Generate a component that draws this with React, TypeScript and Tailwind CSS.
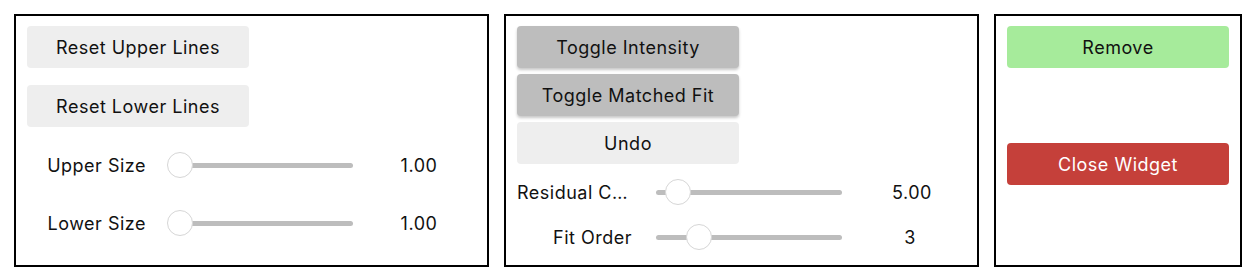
import React from 'react';

const font = { fontFamily: 'Inter, "Noto Sans", sans-serif' };

function Btn({ label, tone = 'plain' }: { label: string; tone?: 'plain' | 'mod' | 'ok' | 'danger' }) {
  const tones = {
    plain: 'bg-[#eeeeee] text-[#111111]',
    mod: 'bg-[#bdbdbd] text-[#111111] shadow-[0_2px_3px_rgba(0,0,0,0.22)]',
    ok: 'bg-[#a6eb9b] text-[#111111]',
    danger: 'bg-[#c5403a] text-white',
  };
  return (
    <button className={`w-[222px] h-[42px] shrink-0 rounded-[4px] pt-[1px] text-[18px] tracking-[0.5px] ${tones[tone]}`}>
      {label}
    </button>
  );
}

interface SliderRowProps {
  label: string;
  value: string;
  pos: number; // thumb center offset from track start
  labelW: number;
  trackW: number;
  valueGap: number;
}

function SliderRow({ label, value, pos, labelW, trackW, valueGap }: SliderRowProps) {
  return (
    <div className="flex items-center h-[32px] text-[18px] tracking-[0.5px] text-[#111111]">
      <div className="shrink-0 truncate text-right" style={{ width: labelW }}>
        {label}
      </div>
      <div className="relative shrink-0 ml-[24px] h-[32px] flex items-center" style={{ width: trackW }}>
        <div className="w-full h-[5px] rounded-full bg-[#bdbdbd]" />
        <div
          className="absolute top-[3px] w-[26px] h-[26px] rounded-full bg-white border border-[#d6d6d6]"
          style={{ left: pos - 13 }}
        />
      </div>
      <div className="shrink-0 w-[100px] text-center" style={{ marginLeft: valueGap }}>
        {value}
      </div>
    </div>
  );
}

export default function App() {
  return (
    <div className="flex gap-[15px] p-[14px] bg-white" style={font}>
      {/* line controls */}
      <div className="w-[475px] h-[253px] border-2 border-black pt-[10px] px-[11px] flex flex-col">
        <Btn label="Reset Upper Lines" />
        <div className="mt-[17px]">
          <Btn label="Reset Lower Lines" />
        </div>
        <div className="mt-[22px] flex flex-col gap-[26px]">
          <SliderRow label="Upper Size" value="1.00" pos={10} labelW={119} trackW={183} valueGap={16} />
          <SliderRow label="Lower Size" value="1.00" pos={10} labelW={119} trackW={183} valueGap={16} />
        </div>
      </div>

      {/* fit controls */}
      <div className="w-[475px] h-[253px] border-2 border-black pt-[10px] px-[11px] flex flex-col">
        <Btn label="Toggle Intensity" tone="mod" />
        <div className="mt-[6px]">
          <Btn label="Toggle Matched Fit" tone="mod" />
        </div>
        <div className="mt-[6px]">
          <Btn label="Undo" />
        </div>
        <div className="mt-[12px] flex flex-col gap-[13px]">
          <SliderRow label="Residual Cutoff" value="5.00" pos={22} labelW={115} trackW={186} valueGap={20} />
          <SliderRow label="Fit Order" value="3" pos={43} labelW={115} trackW={186} valueGap={18} />
        </div>
      </div>

      {/* widget actions */}
      <div className="w-[248px] h-[253px] border-2 border-black pt-[10px] px-[11px] flex flex-col">
        <Btn label="Remove" tone="ok" />
        <div className="mt-[75px]">
          <Btn label="Close Widget" tone="danger" />
        </div>
      </div>
    </div>
  );
}
